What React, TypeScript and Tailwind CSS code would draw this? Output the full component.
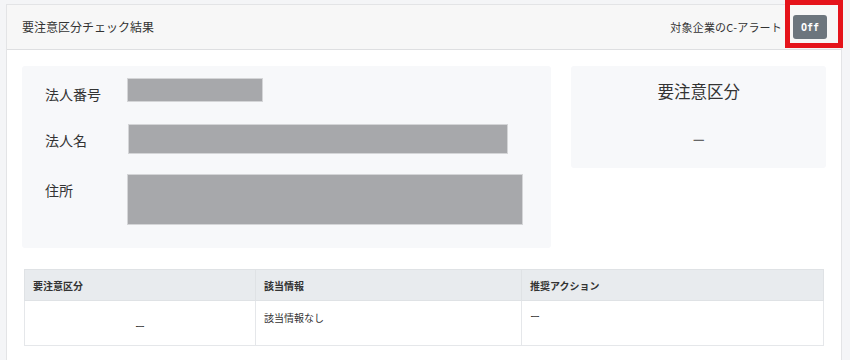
import React from "react";

const FONT = "font-['Noto_Sans_CJK_JP','Noto_Sans',sans-serif]";

function Redacted({ className }: { className: string }) {
  return <div className={`border border-[#d4d5d7] bg-[#a7a8ab] ${className}`} />;
}

export default function App() {
  const rows: [string, string][] = [
    ["法人番号", "w-[136px] h-[24px]"],
    ["法人名", "w-[380px] h-[30px] ml-px"],
    ["住所", "w-[396px] h-[51px]"],
  ];
  return (
    <div className={`relative h-[360px] w-[850px] overflow-hidden bg-[#f4f5f7] pl-[6px] pt-[4px] ${FONT}`}>
      <div className="h-[400px] w-[836px] border border-[#e3e4e6] bg-white">
        {/* header */}
        <div className="flex h-[45px] items-center justify-between border-b border-[#dedfe1] bg-[#f7f7f7] pl-[15px] pr-[14px]">
          <span className="text-[12px] text-[#333]">要注意区分チェック結果</span>
          <div className="flex items-center gap-[11px]">
            <span className="text-[11px] tracking-[0.2px] text-[#333]">対象企業のC-アラート</span>
            <button className="h-[24px] w-[34px] rounded-[3px] bg-[#6c757d] font-['DejaVu_Sans_Mono',monospace] text-[10px] font-bold text-white">
              Off
            </button>
          </div>
        </div>

        {/* body */}
        <div className="px-[15px] pt-[16px]">
          <div className="flex items-start gap-[20px]">
            <div className="flex h-[182px] w-[530px] flex-col gap-[20px] rounded-[3px] bg-[#f7f8fa] pl-[23px] pt-[12px]">
              {rows.map(([label, box]) => (
                <div key={label} className="flex items-start">
                  <span className="w-[82px] pt-[6px] text-[14px] leading-[20px] text-[#333]">{label}</span>
                  <Redacted className={box} />
                </div>
              ))}
            </div>
            <div className="flex h-[102px] w-[255px] flex-col items-center rounded-[3px] bg-[#f7f8fa] pt-[13px]">
              <span className="text-[16.5px] leading-[24px] text-[#333]">要注意区分</span>
              <span className="mt-[27px] text-[13px] leading-[20px] text-[#666]">ー</span>
            </div>
          </div>

          <table className="ml-[2px] mt-[21px] w-[800px] table-fixed border-collapse text-[10px] text-[#333]">
            <colgroup>
              <col className="w-[231px]" />
              <col className="w-[266px]" />
              <col />
            </colgroup>
            <thead>
              <tr className="h-[31px] bg-[#e8ebee]">
                <th className="border border-[#dfe2e5] px-[8px] text-left font-bold">要注意区分</th>
                <th className="border border-[#dfe2e5] px-[8px] text-left font-bold">該当情報</th>
                <th className="border border-[#dfe2e5] px-[8px] text-left font-bold">推奨アクション</th>
              </tr>
            </thead>
            <tbody>
              <tr className="h-[45px]">
                <td className="border border-[#e5e7ea] pt-[18px] text-center align-top">ー</td>
                <td className="border border-[#e5e7ea] px-[8px] pt-[9px] align-top">該当情報なし</td>
                <td className="border border-[#e5e7ea] px-[8px] pt-[8px] align-top">ー</td>
              </tr>
            </tbody>
          </table>
        </div>
      </div>

      {/* annotation box */}
      <div className="absolute left-[785px] top-0 h-[48px] w-[58px] border-[5px] border-[#e5141b]" />
    </div>
  );
}
